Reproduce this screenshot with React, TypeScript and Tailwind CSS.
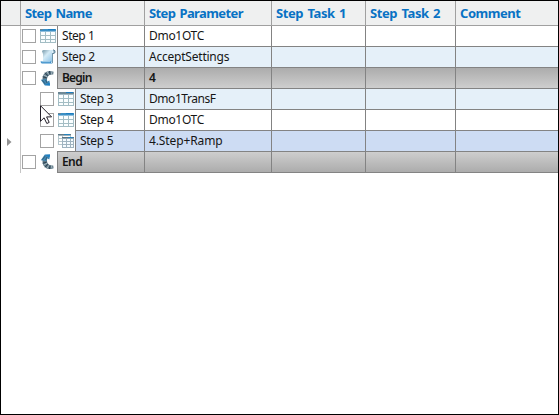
import React from "react";

type Kind = "table" | "tableGray" | "script" | "begin" | "end" | "tables";

interface Row {
  name: string;
  param: string;
  kind: Kind;
  bg: string;
  nested?: boolean;
  bold?: boolean;
  current?: boolean;
  lastNested?: boolean;
  nameSpacing: string;
  paramSpacing: string;
}

const rows: Row[] = [
  { name: "Step 1", param: "Dmo1OTC", kind: "table", bg: "bg-white", nameSpacing: "tracking-[-0.45px]", paramSpacing: "tracking-[-0.3px]" },
  { name: "Step 2", param: "AcceptSettings", kind: "script", bg: "bg-[#e5f0f9]", nameSpacing: "tracking-[-0.4px]", paramSpacing: "tracking-[-0.22px]" },
  { name: "Begin", param: "4", kind: "begin", bg: "bg-linear-to-b from-[#acacac] to-[#cecece]", bold: true, nameSpacing: "tracking-[-0.8px]", paramSpacing: "" },
  { name: "Step 3", param: "Dmo1TransF", kind: "tableGray", bg: "bg-[#e5f0f9]", nested: true, nameSpacing: "tracking-[-0.35px]", paramSpacing: "tracking-[-0.45px]" },
  { name: "Step 4", param: "Dmo1OTC", kind: "table", bg: "bg-white", nested: true, nameSpacing: "tracking-[-0.3px]", paramSpacing: "tracking-[-0.3px]" },
  { name: "Step 5", param: "4.Step+Ramp", kind: "tables", bg: "bg-[#cddcf3]", nested: true, current: true, lastNested: true, nameSpacing: "tracking-[-0.3px]", paramSpacing: "tracking-[-0.12px]" },
  { name: "End", param: "", kind: "end", bg: "bg-linear-to-b from-[#cecece] to-[#acacac]", bold: true, nameSpacing: "tracking-[-0.6px]", paramSpacing: "" },
];

// A curved arrow: the head is at the top left, the tail sweeps to the lower right.
function ArcArrow() {
  return (
    <>
      <path d="M2.8 5Q1.6 10 5 13.2 8.6 16.4 13.6 14.2L13.2 11.4Q9.8 12.2 7.8 9.6 6.6 7.6 7.2 5z" fill="#5d7684" />
      <path d="M2.6 9.2l4-1M5 13.2l2.8-3M9.4 15l.6-3.4" stroke="#2b4354" strokeWidth="1" />
      <path d="M3.4 11.2l3.8-2M7 14.4l1.8-3M12 14.8l-.4-3" stroke="#b2c3cb" strokeWidth=".9" />
      <path d="M.8 6.2L4.6.8 10 .6 9.4 5.4 7.2 4.6 6.4 7 2.8 6.6z" fill="#3f87b4" />
      <path d="M4.6.8L10 .6l-.4 3z" fill="#1c7fc4" />
      <path d="M2.4 5.6L5 2.2M5.6 6L7 3" stroke="#344f61" strokeWidth=".8" />
    </>
  );
}

function StepIcon({ kind }: { kind: Kind }) {
  const common = { width: 16, height: 16, viewBox: "0 0 16 16", className: "block shrink-0" };
  if (kind === "table" || kind === "tableGray") {
    const blue = kind === "table";
    return (
      <svg {...common} shapeRendering="crispEdges">
        <rect x="0" y="1" width="16" height="14" fill="#a3bdc4" />
        <rect x="0" y="1" width="16" height="2" fill={blue ? "#3a8fc5" : "#6f8a97"} />
        <rect x="0" y="3" width="16" height="1" fill={blue ? "#8fbedb" : "#a3b8c2"} />
        <path d="M0 1h3v1H0z" fill="#6a8492" />
        <path d="M8 1h7v1H8z" fill="#1b7cc0" />
        {[4, 8, 12].map((y) => (
          <path key={y} d={`M1 ${y}h4v${y === 12 ? 2 : 3}H1zM6 ${y}h4v${y === 12 ? 2 : 3}H6zM11 ${y}h4v${y === 12 ? 2 : 3}h-4z`} fill="#fafeff" />
        ))}
      </svg>
    );
  }
  if (kind === "tables") {
    return (
      <svg {...common} shapeRendering="crispEdges">
        <rect x="0" y="1" width="13" height="11" fill="#b4c6cc" />
        <path d="M0 1h13v1H0z" fill="#637b88" />
        <path d="M0 2h13v1H0z" fill="#9db0b9" />
        <path d="M6 1h6v1H6z" fill="#2683bd" />
        <path d="M1 3h3v2H1zM1 6h3v2H1zM1 9h3v2H1zM5 3h7v1H5z" fill="#fff" />
        <rect x="4" y="4" width="12" height="11" fill="#9fb3c0" />
        <path d="M4 4h12v1H4z" fill="#5c7382" />
        <path d="M4 5h12v1H4z" fill="#8ca6b5" />
        <path d="M10 4h5v1h-5z" fill="#2683bd" />
        <path d="M5 6h3v2H5zM9 6h3v2H9zM13 6h2v2h-2zM5 9h3v2H5zM9 9h3v2H9zM13 9h2v2h-2zM5 12h3v2H5zM9 12h3v2H9zM13 12h2v2h-2z" fill="#f5fbff" />
      </svg>
    );
  }
  if (kind === "script") {
    return (
      <svg {...common}>
        <defs>
          <linearGradient id="paper" x2="1" y2="1">
            <stop offset="0" stopColor="#7395a6" />
            <stop offset=".4" stopColor="#d5ebf6" />
            <stop offset="1" stopColor="#85bde4" />
          </linearGradient>
        </defs>
        <path d="M2 2.2Q2.4 1 4 1h9.5l-1 1v11H3V5z" fill="url(#paper)" />
        <path d="M13 1h.7q1.6.3 1.3 2.2-.3 1.4-1.9 1.3" fill="#aac7d8" stroke="#416b83" strokeWidth=".9" />
        <path d="M.6 12.2h10q0 1.6 2.2 2.3H1.8Q.6 14 .6 12.2z" fill="#3a8ec9" />
        <path d="M1.5 12.2h8.6v1H1.5z" fill="#acd4ed" />
        <path d="M12.5 4v10" stroke="#688da3" strokeWidth=".9" />
      </svg>
    );
  }
  return (
    <svg {...common}>
      {kind === "begin" ? (
        <g transform="translate(0 16) scale(1 -1)">
          <ArcArrow />
        </g>
      ) : (
        <ArcArrow />
      )}
    </svg>
  );
}

const Checkbox = () => <div className="box-border size-[14px] shrink-0 border border-[#a3a3a3] bg-white" />;

function GridRow({ row }: { row: Row }) {
  const weight = row.bold ? "font-semibold" : "font-normal";
  return (
    <div className="flex h-[21px]">
      <div className="flex w-5 shrink-0 items-center border-r border-[#c5c5c5]">
        {row.current && (
          <svg className="ml-[6px] block" width="5" height="8" viewBox="0 0 5 8">
            <path d="M0 0L4.5 4 0 8z" fill="#929292" />
          </svg>
        )}
      </div>
      <div className={`flex shrink-0 flex-col bg-white ${row.nested ? "w-[54px] pl-[19px]" : "w-9 pl-px"}`}>
        <div className="flex h-5 items-center gap-1">
          <Checkbox />
          <StepIcon kind={row.kind} />
        </div>
        {row.lastNested && <div className="ml-[17px] h-px bg-[#838383]" />}
      </div>
      <div className={`flex min-w-0 flex-1 border-b border-l border-[#838383] ${row.bg} ${weight}`}>
        <div className={`flex shrink-0 items-center border-r border-[#838383] pl-1 ${row.nested ? "w-[69px]" : "w-[87px]"} ${row.nameSpacing}`}>{row.name}</div>
        <div className={`flex w-[127px] shrink-0 items-center border-r border-[#838383] pl-1 ${row.paramSpacing}`}>{row.param}</div>
        <div className="w-[94px] shrink-0 border-r border-[#838383]" />
        <div className="w-[90px] shrink-0 border-r border-[#838383]" />
        <div className="flex-1" />
      </div>
    </div>
  );
}

const headers = [
  { text: "Step Name", style: "w-[124px] tracking-[-0.6px]" },
  { text: "Step Parameter", style: "w-[127px] tracking-[-0.6px]" },
  { text: "Step Task 1", style: "w-[94px] tracking-[-0.4px]" },
  { text: "Step Task 2", style: "w-[90px] tracking-[-0.4px]" },
];

export default function App() {
  return (
    <div className="relative h-[415px] w-[559px] overflow-hidden border border-black bg-white font-['Noto_Sans',sans-serif] text-[12px] leading-4 text-[#161616]">
      <div className="flex h-[25px] border-b border-[#a0a0a0] bg-[#eff0f0] text-[13px] font-bold text-[#0872c4] [word-spacing:1.3px]">
        <div className="w-5 shrink-0 border-r border-[#a0a0a0]" />
        {headers.map((h) => (
          <div key={h.text} className={`flex shrink-0 items-center border-r border-[#a0a0a0] pl-1 ${h.style}`}>{h.text}</div>
        ))}
        <div className="flex flex-1 items-center pl-1 tracking-[-0.45px]">Comment</div>
      </div>
      {rows.map((row) => <GridRow key={row.name} row={row} />)}
      <svg className="absolute left-[39px] top-[104px]" width="13" height="20" viewBox="0 0 13 20">
        <path d="M.5.7v15.6l3.6-3.5 2.7 5.7 2.4-1.1-2.6-5.5h5z" fill="#fff" stroke="#24202a" />
      </svg>
    </div>
  );
}
